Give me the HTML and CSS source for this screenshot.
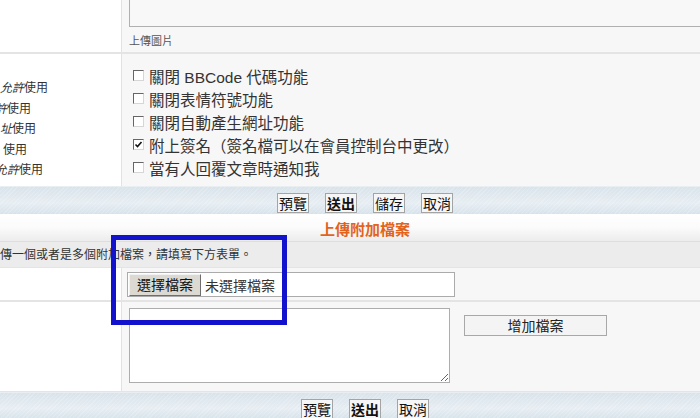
FILE: index.html
```html
<!DOCTYPE html>
<html>
<head>
    <title>發表文章</title>
    <meta charset="utf-8">
    <link rel="stylesheet" href="styles.css">
</head>
<body>
    <div class="page">
        <div class="split top-row">
            <div class="cell-l"></div>
            <div class="cell-r">
                <div class="img-box"></div>
                <div class="hint">上傳圖片</div>
            </div>
        </div>

        <div class="split opts-row">
            <div class="cell-l status">
                <div class="s1"><i>允許</i>使用</div>
                <div class="s2"><i>許</i>使用</div>
                <div class="s3"><i>址</i>使用</div>
                <div class="s4">使用</div>
                <div class="s5"><i>允許</i>使用</div>
            </div>
            <div class="cell-r opts">
                <div class="opt"><span class="box"></span>關閉 BBCode 代碼功能</div>
                <div class="opt"><span class="box"></span>關閉表情符號功能</div>
                <div class="opt"><span class="box"></span>關閉自動產生網址功能</div>
                <div class="opt">
                    <span class="box"><svg width="9" height="9" viewBox="0 0 9 9"><polyline points="1.5,4.5 3.5,6.5 7.5,2" fill="none" stroke="#111" stroke-width="1.6"/></svg></span>附上簽名（簽名檔可以在會員控制台中更改）
                </div>
                <div class="opt"><span class="box"></span>當有人回覆文章時通知我</div>
            </div>
        </div>

        <div class="bar">
            <button type="button" class="btn">預覽</button>
            <button type="button" class="btn main">送出</button>
            <button type="button" class="btn">儲存</button>
            <button type="button" class="btn">取消</button>
        </div>

        <div class="head">上傳附加檔案</div>
        <div class="explain">傳一個或者是多個附加檔案，請填寫下方表單。</div>

        <div class="split file-row">
            <div class="cell-l"></div>
            <div class="cell-r">
                <div class="file-box">
                    <span class="file-btn">選擇檔案</span>
                    <span class="file-name">未選擇檔案</span>
                </div>
            </div>
        </div>

        <div class="split comment-row">
            <div class="cell-l"></div>
            <div class="cell-r comment">
                <textarea class="comment-text"></textarea>
                <button type="button" class="add-btn">增加檔案</button>
            </div>
        </div>

        <div class="bar bottom">
            <button type="button" class="btn">預覽</button>
            <button type="button" class="btn main">送出</button>
            <button type="button" class="btn">取消</button>
        </div>

        <div class="mark"></div>
    </div>
</body>
</html>
```

FILE: styles.css
```css
body {
    margin: 0;
    font-family: "Liberation Sans", "Noto Sans CJK TC", sans-serif;
    color: #222;
}

.page {
    position: relative;
    width: 700px;
    height: 418px;
    overflow: hidden;
    background: #fff;
}

.split {
    display: grid;
    grid-template-columns: 121px 1fr;
    column-gap: 1px;
    background: #e2e2e2;
}

.cell-l {
    background: #fff;
    overflow: hidden;
}

.cell-r {
    background: #f7f7f7;
    padding-left: 7px;
}

/* top: image box */
.top-row {
    height: 52px;
    border-bottom: 2px solid #e4e4e4;
}

.img-box {
    height: 26px;
    margin-right: -10px;
    border-left: 1px solid #b0b0b0;
    border-bottom: 1px solid #b0b0b0;
    background: #f8f8f8;
}

.hint {
    margin-top: 7px;
    font-size: 11px;
    line-height: 14px;
    color: #555;
}

/* options */
.opts-row {
    height: 132px;
}

.status {
    padding-top: 24px;
    font-size: 12px;
    line-height: 20.5px;
    color: #333;
    white-space: nowrap;
}

.s2 { margin-left: -5px; }
.s4 { margin-left: 3px; }
.s5 { margin-left: -5px; }

.opts {
    padding-top: 10px;
    padding-left: 11px;
}

.opt {
    display: flex;
    align-items: center;
    height: 23px;
    font-size: 15.5px;
    color: #333;
    white-space: nowrap;
}

.box {
    display: inline-flex;
    align-items: center;
    justify-content: center;
    width: 9px;
    height: 9px;
    margin-right: 5px;
    border: 1px solid;
    border-color: #666 #d6d6d6 #d6d6d6 #666;
    background: #fff;
}

/* button bars */
.bar {
    display: flex;
    justify-content: center;
    gap: 16px;
    height: 28px;
    padding-left: 30px;
    padding-top: 6px;
    box-sizing: border-box;
    border-top: 1px solid #e8eef2;
    background: repeating-linear-gradient(135deg, rgba(255,255,255,0.18) 0 1px, rgba(255,255,255,0) 1px 3px),
                linear-gradient(#d9e3eb, #e7eef3 60%, #d6e2ea);
}

.bar.bottom {
    height: 27px;
}

.btn {
    height: 20px;
    padding: 0 1px;
    font-family: "Noto Sans CJK TC", sans-serif;
    font-size: 14px;
    line-height: 18px;
    color: #111;
    background: #f6f6f6;
    border: 1px solid #a4a4a4;
}

.btn.main {
    font-weight: bold;
}

/* upload section */
.head {
    height: 27px;
    padding-left: 30px;
    border-bottom: 1px solid #dedede;
    background: linear-gradient(#ffffff, #fbfbfb 50%, #ececec);
    font-family: "Noto Sans CJK TC", sans-serif;
    font-size: 15px;
    font-weight: bold;
    line-height: 29px;
    text-align: center;
    color: #e2641c;
}

.explain {
    height: 25px;
    border-bottom: 1px solid #e4e4e4;
    background: #ececec;
    font-size: 12px;
    line-height: 26px;
    color: #333;
    white-space: nowrap;
}

.file-row {
    height: 32px;
    border-bottom: 2px solid #e4e4e4;
}

.file-row .cell-r {
    padding-left: 5px;
    padding-top: 4px;
}

.file-box {
    display: flex;
    align-items: center;
    width: 326px;
    height: 23px;
    border: 1px solid #ababab;
    background: #fff;
}

.file-btn {
    height: 20px;
    margin-left: 1px;
    padding: 0 7px;
    font-size: 14px;
    line-height: 20px;
    color: #111;
    background: #dcd9d2;
    border: 1px solid;
    border-color: #f2f2f2 #6e6e6e #6e6e6e #f2f2f2;
}

.file-name {
    margin-left: 4px;
    font-size: 14px;
    color: #333;
}

.comment-row {
    height: 89px;
    border-bottom: 1px solid #e4e4e4;
}

.comment {
    display: flex;
    align-items: flex-start;
    padding-top: 6px;
}

.comment-text {
    width: 321px;
    height: 75px;
    margin: 0;
    padding: 0;
    box-sizing: border-box;
    border: 1px solid #adadad;
    background: #fff;
    resize: both;
}

.add-btn {
    width: 143px;
    height: 21px;
    margin-left: 14px;
    margin-top: 7px;
    padding: 0;
    font-family: "Noto Sans CJK TC", sans-serif;
    font-size: 14px;
    line-height: 19px;
    color: #222;
    background: #f4f4f4;
    border: 1px solid #a8a8a8;
}

/* annotation box drawn over the page */
.mark {
    position: absolute;
    left: 111px;
    top: 235px;
    width: 176px;
    height: 90px;
    box-sizing: border-box;
    border: 5px solid #1212cc;
}
```
